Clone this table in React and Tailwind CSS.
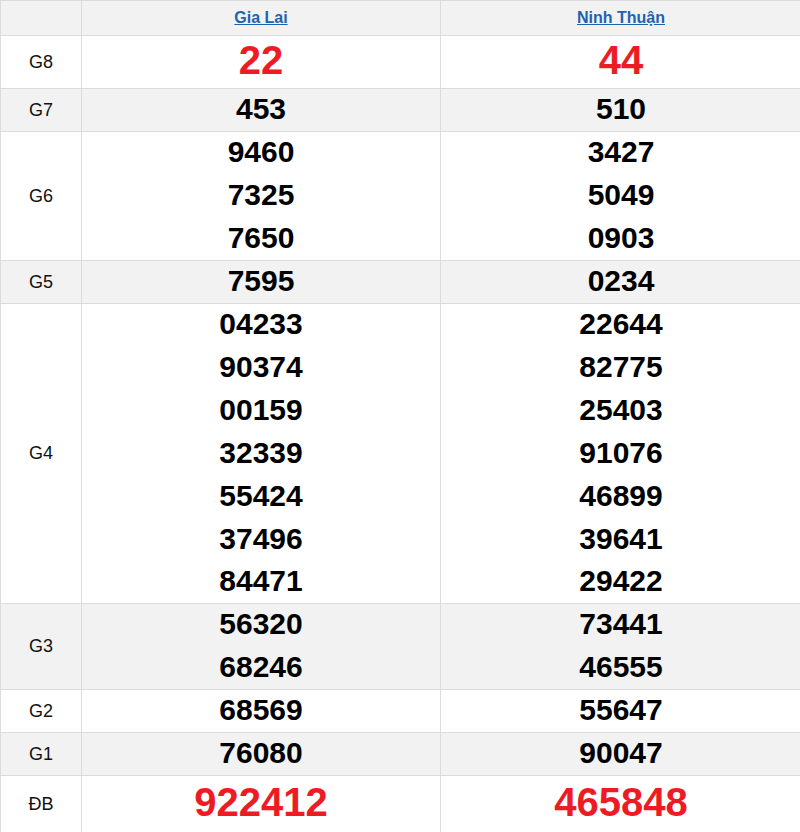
const rows = [
  { label: "G8", a: ["22"], b: ["44"], big: true, h: "h-[52px]" },
  { label: "G7", a: ["453"], b: ["510"], shade: true },
  { label: "G6", a: ["9460", "7325", "7650"], b: ["3427", "5049", "0903"] },
  { label: "G5", a: ["7595"], b: ["0234"], shade: true },
  {
    label: "G4",
    a: ["04233", "90374", "00159", "32339", "55424", "37496", "84471"],
    b: ["22644", "82775", "25403", "91076", "46899", "39641", "29422"],
    lastH: "h-[41px]",
  },
  { label: "G3", a: ["56320", "68246"], b: ["73441", "46555"], shade: true },
  { label: "G2", a: ["68569"], b: ["55647"] },
  { label: "G1", a: ["76080"], b: ["90047"], shade: true },
  { label: "ĐB", a: ["922412"], b: ["465848"], big: true, h: "h-[56px]" },
];

function Nums({ list, big, h, lastH = "h-[42px]" }) {
  if (big) {
    return (
      <div className={`${h} pb-[4px] flex items-center justify-center text-[40px] font-bold text-[#ed1c24]`}>
        {list[0]}
      </div>
    );
  }
  return (
    <div className="flex flex-col">
      {list.map((n, i) => (
        <div
          key={n}
          className={`${i === list.length - 1 ? lastH : "h-[43px]"} pb-[4px] flex items-center justify-center text-[30px] font-bold text-black`}
        >
          {n}
        </div>
      ))}
    </div>
  );
}

export default function App() {
  return (
    <div className="w-[800px] h-[832px] overflow-hidden bg-white" style={{ fontFamily: '"Liberation Sans", Arial, sans-serif' }}>
      <table className="w-[801px] border-collapse table-fixed">
        <colgroup>
          <col className="w-[81px]" />
          <col className="w-[359px]" />
          <col className="w-[361px]" />
        </colgroup>
        <thead>
          <tr className="bg-[#f2f2f2] h-[35px]">
            <th className="border border-[#dcdcdc]"></th>
            <th className="border border-[#dcdcdc] text-center">
              <a className="text-[16px] font-bold text-[#1e63b0] underline">Gia Lai</a>
            </th>
            <th className="border border-[#dcdcdc] text-center">
              <a className="text-[16px] font-bold text-[#1e63b0] underline">Ninh Thuận</a>
            </th>
          </tr>
        </thead>
        <tbody>
          {rows.map((r) => (
            <tr key={r.label} className={r.shade ? "bg-[#f2f2f2]" : "bg-white"}>
              <td className="border border-[#dcdcdc] text-center text-[18px] text-[#111]">{r.label}</td>
              <td className="border border-[#dcdcdc] p-0">
                <Nums list={r.a} big={r.big} h={r.h} lastH={r.lastH} />
              </td>
              <td className="border border-[#dcdcdc] p-0">
                <Nums list={r.b} big={r.big} h={r.h} lastH={r.lastH} />
              </td>
            </tr>
          ))}
        </tbody>
      </table>
    </div>
  );
}
